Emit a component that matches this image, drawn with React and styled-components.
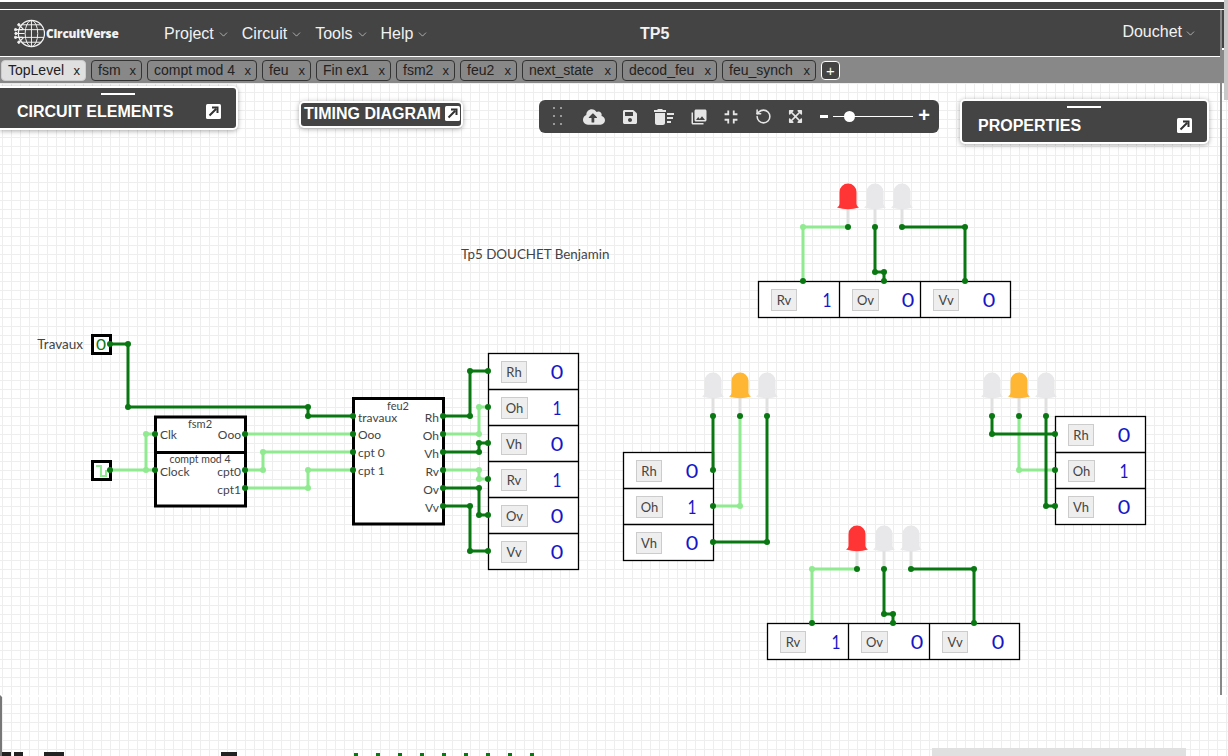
import React from "react";
import styled, { createGlobalStyle } from "styled-components";
import { FaCloudUploadAlt, FaSave, FaExpandArrowsAlt } from "react-icons/fa";
import { MdDeleteSweep, MdPhotoLibrary, MdFullscreenExit } from "react-icons/md";
import { RotateCcw, ChevronDown } from "lucide-react";

const GlobalStyle = createGlobalStyle`
  html, body {
    margin: 0;
    padding: 0;
    height: 756px;
    overflow: hidden;
    background: #fff;
    font-family: "Liberation Sans", Arial, sans-serif;
  }
  * { box-sizing: border-box; }
`;

const DARK = "#0a7812";
const LIGHT = "#90ea90";
const CANVAS_FONT = "Lato, 'Open Sans', sans-serif";
const INK = "#444";

const navItems = ["Project", "Circuit", "Tools", "Help"];
const tabs = [
  ["TopLevel", 85], ["fsm", 51], ["compt mod 4", 110], ["feu", 49], ["Fin ex1", 75],
  ["fsm2", 59], ["feu2", 57], ["next_state", 95], ["decod_feu", 95], ["feu_synch", 94],
];

// [points, colour] in page coordinates, light wires first so dark ones cross over them
const wires = [
  ["110,470 155,470", LIGHT],
  ["146,470 146,434 155,434", LIGHT],
  ["245,434 353,434", LIGHT],
  ["245,470 263,470 263,452 353,452", LIGHT],
  ["245,488 308,488 308,470 353,470", LIGHT],
  ["443,434 479,434 479,407 488,407", LIGHT],
  ["443,470 479,470 479,479 488,479", LIGHT],
  ["848,227 803,227 803,281", LIGHT],
  ["713,506 740,506 740,416", LIGHT],
  ["1019,416 1019,470 1055,470", LIGHT],
  ["857,569 812,569 812,623", LIGHT],
  ["110,344 128,344 128,407 308,407 308,416 353,416", DARK],
  ["443,416 470,416 470,371 488,371", DARK],
  ["443,452 479,452 479,443 488,443", DARK],
  ["443,488 479,488 479,515 488,515", DARK],
  ["443,506 470,506 470,551 488,551", DARK],
  ["875,227 875,272 884,272 884,281", DARK],
  ["902,227 965,227 965,281", DARK],
  ["713,416 713,470", DARK],
  ["713,542 767,542 767,416", DARK],
  ["992,416 992,434 1055,434", DARK],
  ["1046,416 1046,506 1055,506", DARK],
  ["884,569 884,614 893,614 893,623", DARK],
  ["911,569 974,569 974,623", DARK],
];

const lightDots = [
  [146, 470], [146, 434], [263, 470], [263, 452], [308, 488], [308, 470],
  [479, 434], [479, 407], [479, 470], [479, 479], [803, 227], [740, 506],
  [1019, 470], [812, 569],
];

const darkDots = [
  [110, 344], [128, 344], [128, 407], [308, 407], [308, 416], [353, 416],
  [110, 470], [155, 470], [155, 434], [245, 434], [245, 470], [245, 488],
  [353, 434], [353, 452], [353, 470], [443, 416], [443, 434], [443, 452],
  [443, 470], [443, 488], [443, 506], [470, 416], [470, 371], [479, 452],
  [479, 443], [479, 488], [479, 515], [470, 506], [470, 551], [488, 371],
  [488, 407], [488, 443], [488, 479], [488, 515], [488, 551], [848, 227],
  [875, 227], [902, 227], [803, 281], [884, 281], [965, 281], [875, 272],
  [884, 272], [965, 227], [713, 416], [740, 416], [767, 416], [713, 470],
  [713, 506], [713, 542], [767, 542], [992, 416], [1019, 416], [1046, 416],
  [992, 434], [1055, 434], [1055, 470], [1055, 506], [1046, 506], [857, 569],
  [884, 569], [911, 569], [812, 623], [893, 623], [974, 623], [884, 614],
  [893, 614], [974, 569],
];

const leds = [
  [848, 183, "#ff3535"], [875, 183], [902, 183],
  [713, 372], [740, 372, "#ffb733"], [767, 372],
  [992, 372], [1019, 372, "#ffb733"], [1046, 372],
  [857, 525, "#ff3535"], [884, 525], [911, 525],
];

const rowTables = [
  { x: 488.5, y: 353.5, labelX: 501, valueX: 557, rows: [["Rh", 0], ["Oh", 1], ["Vh", 0], ["Rv", 1], ["Ov", 0], ["Vv", 0]] },
  { x: 623.5, y: 452.5, labelX: 636, valueX: 692, rows: [["Rh", 0], ["Oh", 1], ["Vh", 0]] },
  { x: 1055.5, y: 416.5, labelX: 1068, valueX: 1124, rows: [["Rh", 0], ["Oh", 1], ["Vh", 0]] },
];

const columnTables = [
  { x: 758.5, y: 281.5 },
  { x: 767.5, y: 623.5 },
];
const columnCells = [["Rv", 1], ["Ov", 0], ["Vv", 0]];

function Cell({ y, label, value, labelX, valueX }) {
  const w = label.startsWith("O") ? 26 : 25;
  return (
    <g>
      <rect x={labelX + 0.5} y={y + 8} width={w} height={21} fill="#eee" stroke="#ccc" />
      <CircuitText x={labelX + 0.5 + w / 2} y={y + 23} $size={13} textAnchor="middle" fill={INK}>
        {label}
      </CircuitText>
      <CircuitText
        x={valueX}
        y={y + 25}
        $size={19}
        textAnchor="middle"
        fill="#1616c8"
        textLength={value ? 9 : 12.5}
        lengthAdjust="spacingAndGlyphs"
      >
        {value}
      </CircuitText>
    </g>
  );
}

function Led({ x, y, color = "#e8e8ea" }) {
  return (
    <g>
      <line x1={x} y1={y + 26} x2={x} y2={y + 44} stroke="#e0e0e0" strokeWidth="3" />
      <path
        d={`M${x - 8.5} ${y + 21} V${y + 9} A8.5 8.5 0 0 1 ${x + 8.5} ${y + 9} V${y + 21} Q${x + 8.5} ${y + 23} ${x + 11} ${y + 24.5} Q${x} ${y + 28} ${x - 11} ${y + 24.5} Q${x - 8.5} ${y + 23} ${x - 8.5} ${y + 21} Z`}
        fill={color}
      />
    </g>
  );
}

function CircuitDrawing() {
  return (
    <CircuitSvg viewBox="0 83 1228 673" width="1228" height="673">
      {leds.map(([x, y, color]) => (
        <Led key={`${x}-${y}`} x={x} y={y} color={color} />
      ))}

      {rowTables.map((t) => (
        <g key={t.x}>
          <rect x={t.x} y={t.y} width={90} height={t.rows.length * 36} fill="#fff" stroke="#000" strokeWidth="1.3" />
          {t.rows.map(([label, value], i) => (
            <g key={label}>
              {i > 0 && <line x1={t.x} x2={t.x + 90} y1={t.y + i * 36} y2={t.y + i * 36} stroke="#000" strokeWidth="1.3" />}
              <Cell y={t.y + i * 36} label={label} value={value} labelX={t.labelX} valueX={t.valueX} />
            </g>
          ))}
        </g>
      ))}

      {columnTables.map((t) => (
        <g key={t.x}>
          <rect x={t.x} y={t.y} width={252} height={36} fill="#fff" stroke="#000" strokeWidth="1.3" />
          <line x1={t.x + 81} x2={t.x + 81} y1={t.y} y2={t.y + 36} stroke="#000" strokeWidth="1.3" />
          <line x1={t.x + 162} x2={t.x + 162} y1={t.y} y2={t.y + 36} stroke="#000" strokeWidth="1.3" />
          {columnCells.map(([label, value], i) => (
            <Cell
              key={label}
              y={t.y}
              label={label}
              value={value}
              labelX={t.x + 12.5 + i * 81}
              valueX={t.x + 68.5 + i * 81}
            />
          ))}
        </g>
      ))}

      <rect x="155.5" y="417" width="90" height="89" fill="#fff" stroke="#000" strokeWidth="3" />
      <line x1="155" x2="246" y1="452.5" y2="452.5" stroke="#000" strokeWidth="3" />
      <rect x="353.5" y="398.5" width="90" height="125.5" fill="#fff" stroke="#000" strokeWidth="3" />
      <rect x="92.5" y="335.5" width="18" height="18" fill="#fff" stroke="#000" strokeWidth="3" />
      <rect x="92.5" y="461.5" width="18" height="18" fill="#fff" stroke="#000" strokeWidth="3" />
      <path d="M96 466 H101 V476 H106 V470" fill="none" stroke={LIGHT} strokeWidth="2" />

      {wires.map(([points, color]) => (
        <polyline key={points} points={points} fill="none" stroke={color} strokeWidth="3" />
      ))}
      {lightDots.map(([x, y]) => (
        <circle key={`l${x}-${y}`} cx={x} cy={y} r="3" fill={LIGHT} />
      ))}
      {darkDots.map(([x, y]) => (
        <circle key={`d${x}-${y}`} cx={x} cy={y} r="3" fill={DARK} />
      ))}

      <CircuitText x="83" y="349" $size={13.5} textAnchor="end" fill={INK}>Travaux</CircuitText>
      <CircuitText x="101" y="349.5" $size={15} textAnchor="middle" fill={DARK} textLength="10" lengthAdjust="spacingAndGlyphs">0</CircuitText>
      <CircuitText x="461" y="259" $size={13.4} fill={INK}>Tp5 DOUCHET Benjamin</CircuitText>

      <CircuitText x="200" y="428" $size={11} textAnchor="middle" fill={INK}>fsm2</CircuitText>
      <CircuitText x="160" y="439" $size={12} fill={INK}>Clk</CircuitText>
      <CircuitText x="241" y="439" $size={12} textAnchor="end" fill={INK}>Ooo</CircuitText>
      <CircuitText x="200" y="463" $size={10.5} textAnchor="middle" fill={INK}>compt mod 4</CircuitText>
      <CircuitText x="160" y="476" $size={12} fill={INK}>Clock</CircuitText>
      <CircuitText x="241" y="476" $size={12} textAnchor="end" fill={INK}>cpt0</CircuitText>
      <CircuitText x="241" y="494" $size={12} textAnchor="end" fill={INK}>cpt1</CircuitText>

      <CircuitText x="398" y="410" $size={11} textAnchor="middle" fill={INK}>feu2</CircuitText>
      <CircuitText x="358" y="421.5" $size={12} fill={INK}>travaux</CircuitText>
      <CircuitText x="358" y="439" $size={12} fill={INK}>Ooo</CircuitText>
      <CircuitText x="358" y="457" $size={12} fill={INK}>cpt 0</CircuitText>
      <CircuitText x="358" y="475" $size={12} fill={INK}>cpt 1</CircuitText>
      {["Rh", "Oh", "Vh", "Rv", "Ov", "Vv"].map((label, i) => (
        <CircuitText key={label} x="439" y={421.5 + i * 18} $size={12} textAnchor="end" fill={INK}>
          {label}
        </CircuitText>
      ))}
    </CircuitSvg>
  );
}

function Logo() {
  return (
    <LogoMark viewBox="0 0 32 32" fill="none" stroke="#f2f2f2" strokeWidth="1">
      <circle cx="18" cy="16" r="13.5" strokeWidth="1.3" />
      <ellipse cx="18" cy="16" rx="6.5" ry="13.5" />
      <path d="M18 2.5 V29.5 M8 7 H28 M5.5 12 H31 M5.5 20 H31 M8 25 H28" />
      <path d="M1 12 H9 M2 16 H11 M1 20 H9 M5 7 L10 12 M5 25 L10 20" strokeWidth="1.2" />
      <circle cx="1.6" cy="12" r="1.2" fill="#f2f2f2" />
      <circle cx="2" cy="16" r="1.2" fill="#f2f2f2" />
      <circle cx="1.6" cy="20" r="1.2" fill="#f2f2f2" />
      <circle cx="5" cy="7" r="1.2" fill="#f2f2f2" />
      <circle cx="5" cy="25" r="1.2" fill="#f2f2f2" />
    </LogoMark>
  );
}

function OpenIcon() {
  return (
    <OpenMark width="15" height="15" viewBox="0 0 15 15">
      <rect width="15" height="15" rx="1.5" fill="#fff" />
      <path d="M3.5 11.5 L10 5 M6 3.5 H11.5 V9" fill="none" stroke="#333" strokeWidth="2" />
    </OpenMark>
  );
}

export default function App() {
  return (
    <Page>
      <GlobalStyle />
      <TopStrip />
      <Navbar>
        <LogoLink>
          <Logo />
          <LogoText>CircuitVerse</LogoText>
        </LogoLink>
        <NavList>
          {navItems.map((item) => (
            <NavItem key={item}>
              {item}
              <ChevronDown size={13} strokeWidth={1.1} />
            </NavItem>
          ))}
        </NavList>
        <ProjectTitle>TP5</ProjectTitle>
        <UserMenu>
          Douchet
          <ChevronDown size={13} strokeWidth={1.1} />
        </UserMenu>
      </Navbar>
      <TabBar>
        {tabs.map(([tab, width], i) => (
          <Tab key={tab} $active={i === 0} $width={width}>
            {tab}
            <TabClose>x</TabClose>
          </Tab>
        ))}
        <AddTab>+</AddTab>
      </TabBar>
      <Canvas>
        <CircuitDrawing />

        <FloatingPanel $docked $left={0} $top={3} $width={238} $height={44}>
          <DragBar $left={101} />
          <PanelTitle>CIRCUIT ELEMENTS</PanelTitle>
          <OpenIcon />
        </FloatingPanel>

        <TimingPanel>
          <TimingTitle>TIMING DIAGRAM</TimingTitle>
          <OpenIcon />
        </TimingPanel>

        <Toolbar>
          <DragDots>
            {[0, 1, 2, 3, 4, 5].map((n) => (
              <i key={n} />
            ))}
          </DragDots>
          <ToolIcon $left={44}><FaCloudUploadAlt size={22} /></ToolIcon>
          <ToolIcon $left={83}><FaSave size={16} /></ToolIcon>
          <ToolIcon $left={113}><MdDeleteSweep size={24} /></ToolIcon>
          <ToolIcon $left={151}><MdPhotoLibrary size={18} /></ToolIcon>
          <ToolIcon $left={181}><MdFullscreenExit size={22} /></ToolIcon>
          <ToolIcon $left={216}><RotateCcw size={17} strokeWidth={2.2} /></ToolIcon>
          <ToolIcon $left={249}><FaExpandArrowsAlt size={15} /></ToolIcon>
          <ZoomControl>
            <ZoomMinus />
            <ZoomTrack>
              <ZoomKnob />
            </ZoomTrack>
            <ZoomPlus>+</ZoomPlus>
          </ZoomControl>
        </Toolbar>

        <FloatingPanel $left={960} $top={16} $width={249} $height={45}>
          <DragBar $left={105} />
          <PanelTitle>PROPERTIES</PanelTitle>
          <OpenIcon />
        </FloatingPanel>

        <BottomStrip>
          <PeekBar $left={0} $width={9} />
          <PeekBar $left={12} $width={9} />
          <PeekBar $left={42} $width={20} />
          <PeekBar $left={219} $width={16} />
          <PeekDots />
          <PeekBar $left={930} $width={254} $color="#e0e0e0" $tall />
        </BottomStrip>
      </Canvas>
      <WindowEdge />
      <NavEdge />
      <TabEdge />
      <ScrollRail />
    </Page>
  );
}

const Page = styled.div`
  position: relative;
  width: 1228px;
  height: 756px;
  display: flex;
  flex-direction: column;
  overflow: hidden;
  background: #fff;
`;

const TopStrip = styled.div`
  height: 8px;
  margin: 2px 4px 0 0;
  background: #444;
  flex: none;
  border-bottom: 1px solid #fff;
`;

const Navbar = styled.nav`
  height: 47px;
  margin-right: 8px;
  flex: none;
  display: flex;
  align-items: center;
  background: #444;
  border-bottom: 1px solid #fff;
  color: #f2f2f2;
  font-size: 16px;
  position: relative;
`;

const LogoLink = styled.div`
  display: flex;
  align-items: center;
  width: 164px;
  padding-left: 14px;
  gap: 1px;
`;

const LogoMark = styled.svg`
  width: 31px;
  height: 31px;
`;

const LogoText = styled.span`
  font-family: "Open Sans", sans-serif;
  font-size: 11.8px;
  font-weight: 800;
  letter-spacing: -0.2px;
`;

const NavList = styled.div`
  display: flex;
  gap: 12px;
  margin-top: 1px;
`;

const NavItem = styled.div`
  display: flex;
  align-items: center;
  gap: 3px;
  svg { margin-top: 2px; }
`;

const ProjectTitle = styled.div`
  position: absolute;
  left: 640px;
  top: 15px;
  font-weight: 700;
`;

const UserMenu = styled.div`
  margin-left: auto;
  margin-right: 23px;
  margin-top: -3px;
  display: flex;
  align-items: center;
  gap: 2px;
  svg { margin-top: 3px; }
`;

const TabBar = styled.div`
  height: 26px;
  margin-right: 8px;
  flex: none;
  background: #888;
  display: flex;
  align-items: center;
  padding-left: 1px;
  gap: 5px;
`;

const Tab = styled.div`
  width: ${({ $width }) => $width}px;
  height: 21px;
  padding: 0 5px 0 6px;
  display: flex;
  align-items: center;
  justify-content: space-between;
  border: 1px solid ${({ $active }) => ($active ? "#ccc" : "#333")};
  border-radius: 4px;
  background: ${({ $active }) => ($active ? "#e0e0e0" : "#888")};
  color: #222;
  font-size: 14px;
  white-space: nowrap;
`;

const TabClose = styled.span`
  font-size: 13px;
`;

const AddTab = styled.div`
  width: 19px;
  height: 19px;
  display: flex;
  align-items: center;
  justify-content: center;
  background: #444;
  border: 1px solid #fff;
  border-radius: 4px;
  color: #fff;
  font-size: 15px;
`;

const Canvas = styled.main`
  position: relative;
  flex: 1;
  overflow: hidden;
  background-color: #fff;
  background-image:
    linear-gradient(#eee 1px, transparent 1px),
    linear-gradient(90deg, #eee 1px, transparent 1px);
  background-size: 9px 9px;
  background-position: 2px 0;
`;

const CircuitSvg = styled.svg`
  display: block;
`;

const CircuitText = styled.text`
  font-family: ${CANVAS_FONT};
  font-size: ${({ $size }) => $size}px;
`;

const OpenMark = styled.svg`
  flex: none;
  margin-top: -1px;
`;

const FloatingPanel = styled.section`
  position: absolute;
  left: ${({ $left }) => $left}px;
  top: ${({ $top }) => $top}px;
  width: ${({ $width }) => $width}px;
  height: ${({ $height }) => $height}px;
  display: flex;
  align-items: center;
  padding: 8px 15px 0 ${({ $docked }) => ($docked ? 17 : 16)}px;
  background: #444;
  border: 2px solid #fff;
  border-left: ${({ $docked }) => ($docked ? "none" : "2px solid #fff")};
  border-radius: ${({ $docked }) => ($docked ? "0 5px 5px 0" : "5px")};
  box-shadow: 0 1px 5px rgba(0, 0, 0, 0.35);
`;

const DragBar = styled.div`
  position: absolute;
  left: ${({ $left }) => $left}px;
  top: 5px;
  width: 34px;
  height: 2px;
  background: #fff;
`;

const PanelTitle = styled.h2`
  flex: 1;
  margin: 0;
  color: #fff;
  font-size: 16px;
  font-weight: 700;
`;

const TimingPanel = styled.section`
  position: absolute;
  left: 299px;
  top: 18px;
  width: 164px;
  height: 27px;
  display: flex;
  align-items: center;
  gap: 4px;
  padding: 0 3px 1px;
  background: #444;
  border: 2px solid #fff;
  border-radius: 5px;
  box-shadow: 0 1px 5px rgba(0, 0, 0, 0.35);
`;

const TimingTitle = styled.h2`
  margin: 0;
  color: #fff;
  font-size: 16px;
  font-weight: 700;
  white-space: nowrap;
`;

const Toolbar = styled.div`
  position: absolute;
  left: 539px;
  top: 17px;
  width: 400px;
  height: 33px;
  background: #444;
  border-radius: 6px;
`;

const DragDots = styled.div`
  position: absolute;
  left: 14px;
  top: 7px;
  display: grid;
  grid-template-columns: 2px 2px;
  column-gap: 5px;
  row-gap: 6px;
  i {
    width: 2px;
    height: 2px;
    background: #999;
  }
`;

const ToolIcon = styled.div`
  position: absolute;
  left: ${({ $left }) => $left}px;
  top: 0;
  height: 33px;
  display: flex;
  align-items: center;
  color: #e6e6e6;
`;

const ZoomControl = styled.div`
  position: absolute;
  left: 281px;
  top: 0;
  height: 33px;
  display: flex;
  align-items: center;
  gap: 5px;
  color: #fff;
`;

const ZoomMinus = styled.span`
  width: 8px;
  height: 3px;
  background: #fff;
`;

const ZoomPlus = styled.span`
  width: 12px;
  text-align: center;
  font-size: 20px;
  font-weight: 700;
  margin-top: -3px;
`;

const ZoomTrack = styled.div`
  position: relative;
  width: 80px;
  height: 1px;
  background: #fff;
`;

const ZoomKnob = styled.span`
  position: absolute;
  left: 11px;
  top: -5px;
  width: 11px;
  height: 11px;
  border-radius: 50%;
  background: #fff;
`;

const WindowEdge = styled.div`
  position: absolute;
  left: 1220px;
  top: 10px;
  height: 685px;
  width: 2px;
  background: #888;
`;

const NavEdge = styled.div`
  position: absolute;
  left: 1222px;
  top: 10px;
  height: 38px;
  width: 2px;
  background: #444;
`;

const TabEdge = styled.div`
  position: absolute;
  left: 1222px;
  top: 50px;
  height: 33px;
  width: 2px;
  background: #888;
`;

const ScrollRail = styled.div`
  position: absolute;
  left: 1224px;
  top: 0;
  height: 100px;
  width: 4px;
  background: #c8c8c8;
`;

const BottomStrip = styled.div`
  position: absolute;
  left: 0;
  right: 0;
  bottom: 0;
  height: 61px;
  border-left: 2px solid #777;
  border-top: 2px solid #fff;
`;

const PeekBar = styled.span`
  position: absolute;
  bottom: 0;
  left: ${({ $left }) => $left}px;
  width: ${({ $width }) => $width}px;
  height: ${({ $tall }) => ($tall ? 8 : 4)}px;
  background: ${({ $color }) => $color || "#222"};
`;

const PeekDots = styled.span`
  position: absolute;
  bottom: 0;
  left: 352px;
  width: 188px;
  height: 3px;
  background: repeating-linear-gradient(90deg, #0a7812 0 4px, transparent 4px 22px);
`;
